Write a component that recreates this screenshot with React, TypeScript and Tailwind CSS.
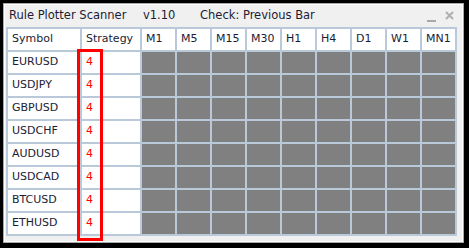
const symbols = ['EURUSD', 'USDJPY', 'GBPUSD', 'USDCHF', 'AUDUSD', 'USDCAD', 'BTCUSD', 'ETHUSD'];
const timeframes = ['M1', 'M5', 'M15', 'M30', 'H1', 'H4', 'D1', 'W1', 'MN1'];

export default function App() {
  return (
    <div
      className="relative w-[469px] h-[248px] bg-black pt-[3px] pl-[3px]"
      style={{ fontFamily: '"DejaVu Sans", Verdana, sans-serif' }}
    >
      <div className="w-[461px] h-[240px] border border-[#a8a8a8] bg-[#f0f0f0]">
        <div className="w-full h-full border border-white">
          {/* title bar */}
          <div className="flex items-center h-[22px] pl-[4px] pr-[8px] text-[11.5px] text-[#1c1c34]">
            <span className="w-[134px] whitespace-nowrap">Rule Plotter Scanner</span>
            <span className="w-[57px] whitespace-nowrap">v1.10</span>
            <span className="whitespace-nowrap">Check: Previous Bar</span>
            <div className="ml-auto flex items-center gap-[9px] text-[#a8a8a8]">
              <span className="block w-[9px] h-[2px] bg-[#a8a8a8] mt-[9px]" />
              <svg width="9" height="9" viewBox="0 0 9 9" className="mt-[-1px]">
                <path d="M1 1 L8 8 M8 1 L1 8" stroke="#b0b0b0" strokeWidth="2" />
              </svg>
            </div>
          </div>

          {/* table */}
          <div className="ml-[1px] w-[451px] bg-[#b9c9d9] p-[2px] grid grid-cols-[72px_58px_repeat(9,33px)] grid-rows-[21px_repeat(8,21px)] gap-[2px] text-[11px] text-[#1c1c34]">
            <div className="bg-white pl-[4px] flex items-center">Symbol</div>
            <div className="bg-white pl-[4px] flex items-center">Strategy</div>
            {timeframes.map((tf) => (
              <div key={tf} className="bg-white pl-[4px] flex items-center">
                {tf}
              </div>
            ))}
            {symbols.map((sym) => (
              <div key={sym} className="contents">
                <div className="bg-white pl-[4px] flex items-center">{sym}</div>
                <div className="bg-white pl-[4px] flex items-center text-[#ff0000]">4</div>
                {timeframes.map((tf) => (
                  <div key={tf} className="bg-[#808080]" />
                ))}
              </div>
            ))}
          </div>
        </div>
      </div>

      {/* highlight box around strategy column */}
      <div className="absolute left-[77px] top-[49px] w-[26px] h-[192px] border-[3px] border-[#ff0000]" />
    </div>
  );
}
